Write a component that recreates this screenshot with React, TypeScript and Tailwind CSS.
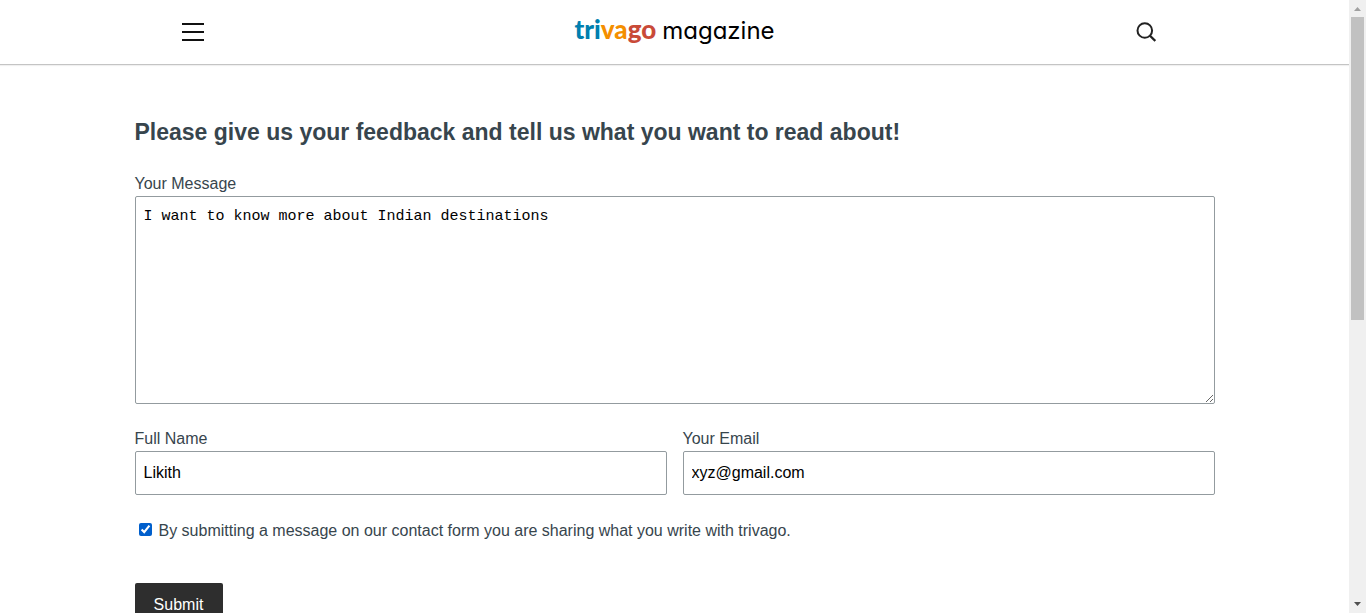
import { useState } from "react";

function Header() {
  return (
    <header className="shrink-0 border-b border-[#c4c4c4] bg-white shadow-[0_1px_1px_rgba(0,0,0,0.06)]">
      <div className="mx-auto flex h-16 max-w-[1080px] items-center justify-between">
        <button type="button" aria-label="Open menu" className="flex h-full w-[116px] items-center justify-center">
          <svg width="22" height="18" viewBox="0 0 22 18" fill="#111" aria-hidden="true">
            <rect width="22" height="2" />
            <rect y="8" width="22" height="2" />
            <rect y="16" width="22" height="2" />
          </svg>
        </button>
        <a href="/" className="flex items-baseline gap-1.5 whitespace-nowrap pb-1 pl-5">
          <span className="font-[Lato,sans-serif] text-[26px] leading-8 font-black">
            <span className="text-[#007faf]">tri</span>
            <span className="text-[#f48f00]">va</span>
            <span className="text-[#c94a38]">go</span>
          </span>
          <span className="font-[Inter,sans-serif] text-2xl leading-8 text-black [font-feature-settings:'cv11']">magazine</span>
        </a>
        <button type="button" aria-label="Search" className="flex h-full w-[136px] items-center justify-center">
          <svg width="20" height="20" viewBox="0 0 20 20" fill="none" stroke="#222" strokeWidth="2" aria-hidden="true">
            <circle cx="8.8" cy="8.5" r="7.3" />
            <path d="M14 13.7 19.3 19" strokeWidth="2.3" />
          </svg>
        </button>
      </div>
    </header>
  );
}

function FeedbackForm() {
  const [message, setMessage] = useState("I want to know more about Indian destinations");
  const [name, setName] = useState("Likith");
  const [email, setEmail] = useState("xyz@gmail.com");
  const [agreed, setAgreed] = useState(true);
  const field = "block w-full rounded-[2px] border border-[#939b9f] bg-white px-2 text-black outline-none";

  return (
    <form className="mx-auto max-w-[1080px] pt-[49px] pb-16" onSubmit={(e) => e.preventDefault()}>
      <h1 className="text-[23px] leading-9 font-bold">
        Please give us your feedback and tell us what you want to read about!
      </h1>
      <label htmlFor="message" className="mt-[22px] block">Your Message</label>
      <textarea
        id="message"
        value={message}
        onChange={(e) => setMessage(e.target.value)}
        className={`${field} h-[208px] resize py-2 font-['Liberation_Mono',monospace] text-[15px] leading-6`}
      />
      <div className="mt-[23px] grid grid-cols-2 gap-4">
        <div>
          <label htmlFor="name" className="block">Full Name</label>
          <input id="name" type="text" value={name} onChange={(e) => setName(e.target.value)} className={`${field} h-11`} />
        </div>
        <div>
          <label htmlFor="email" className="block">Your Email</label>
          <input id="email" type="email" value={email} onChange={(e) => setEmail(e.target.value)} className={`${field} h-11`} />
        </div>
      </div>
      <div className="mt-6 flex items-start gap-[7px] pl-1">
        <input
          id="agree"
          type="checkbox"
          checked={agreed}
          onChange={(e) => setAgreed(e.target.checked)}
          className="mt-1 size-[13px] accent-[#005fcc]"
        />
        <label htmlFor="agree">
          By submitting a message on our contact form you are sharing what you write with trivago.
        </label>
      </div>
      <button type="submit" className="mt-10 h-[43px] w-[88px] rounded-[2px] bg-[#2e2e2e] text-white">
        Submit
      </button>
    </form>
  );
}

function ScrollRail() {
  return (
    <div aria-hidden="true" className="flex w-[17px] shrink-0 flex-col items-center bg-[#f0f0f0]">
      <svg className="h-[17px] w-[17px] shrink-0" viewBox="0 0 17 17" fill="#a0a0a0">
        <path d="M5 11 8.5 7 12 11Z" />
      </svg>
      <div className="flex w-[13px] flex-1 flex-col">
        <div className="h-[52.4%] bg-[#c1c1c1]" />
      </div>
      <svg className="h-[17px] w-[17px] shrink-0" viewBox="0 0 17 17" fill="#505050">
        <path d="M5 6 8.5 10 12 6Z" />
      </svg>
    </div>
  );
}

export default function App() {
  return (
    <div className="flex h-screen bg-white font-['Liberation_Sans',Arial,sans-serif] text-base text-[#37454d]">
      <div className="flex min-w-0 flex-1 flex-col overflow-hidden">
        <Header />
        <main className="min-h-0 flex-1 overflow-hidden">
          <FeedbackForm />
        </main>
      </div>
      <ScrollRail />
    </div>
  );
}
